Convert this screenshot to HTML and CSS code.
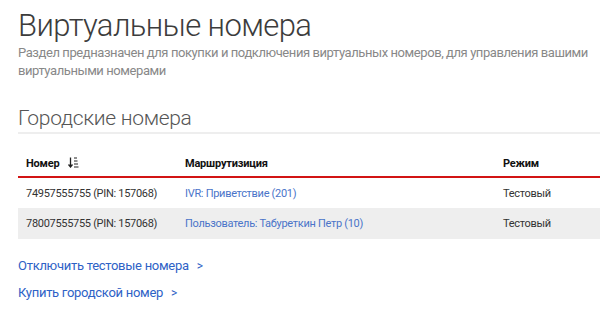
FILE: index.html
```html
<!DOCTYPE html>
<html lang="ru">
<head>
  <meta charset="UTF-8" />
  <title>Виртуальные номера</title>
  <link rel="stylesheet" href="styles.css">
</head>
<body>

  <div class="page">
    <h1 class="page-title">Виртуальные номера</h1>
    <p class="page-lead">Раздел предназначен для покупки и подключения виртуальных номеров, для управления вашими виртуальными номерами</p>

    <h2 class="section-title">Городские номера</h2>

    <table class="numbers">
      <thead>
        <tr>
          <th class="col-number">Номер
            <svg class="sort-icon" width="11" height="11" viewBox="0 0 11 11">
              <path d="M2.5 0.5v9M0.5 7.5l2 2.5 2-2.5" fill="none" stroke="#222" stroke-width="1.3"/>
              <path d="M6 1h3M6 4h3.5M6 7h4M6 10h4.5" stroke="#222" stroke-width="1.2"/>
            </svg>
          </th>
          <th class="col-route">Маршрутизиция</th>
          <th class="col-mode">Режим</th>
        </tr>
      </thead>
      <tbody>
        <tr>
          <td>74957555755 (PIN: 157068)</td>
          <td><a href="#">IVR: Приветствие (201)</a></td>
          <td>Тестовый</td>
        </tr>
        <tr>
          <td>78007555755 (PIN: 157068)</td>
          <td><a href="#">Пользователь: Табуреткин Петр (10)</a></td>
          <td>Тестовый</td>
        </tr>
      </tbody>
    </table>

    <div class="actions">
      <a class="action" href="#">Отключить тестовые номера</a>
      <a class="action" href="#">Купить городской номер</a>
    </div>
  </div>

</body>
</html>
```

FILE: styles.css
```css
body {
  margin: 0;
  font-family: Roboto, 'Noto Sans', sans-serif;
  color: #333;
  background: #fff;
  overflow: hidden;
}

.page {
  padding: 0 0 0 18px;
}

.page-title {
  margin: 0;
  padding-top: 8px;
  font-size: 31px;
  font-weight: 300;
  line-height: 36px;
  letter-spacing: -0.6px;
  color: #3c3c3c;
}

.page-lead {
  margin: 0;
  font-size: 13px;
  line-height: 18px;
  letter-spacing: -0.42px;
  color: #888;
}

.section-title {
  margin: 24px 0 0;
  font-size: 21px;
  font-weight: 300;
  line-height: 28px;
  letter-spacing: -0.3px;
  color: #555;
  border-bottom: 2px solid #eee;
}

.numbers {
  width: 100%;
  table-layout: fixed;
  border-collapse: collapse;
  margin-top: 19px;
  font-size: 11px;
  letter-spacing: -0.3px;
}

.numbers th,
.numbers td {
  box-sizing: border-box;
  white-space: nowrap;
}

.numbers th {
  text-align: left;
  font-weight: bold;
  font-size: 11px;
  line-height: 13px;
  letter-spacing: -0.2px;
  color: #111;
  padding: 4px 8px 6px;
  border-bottom: 2px solid #d21414;
}

.numbers td {
  padding: 0 8px;
  height: 31px;
  color: #333;
}

.numbers tbody tr:nth-child(2) td {
  background: #eee;
}

.col-number { width: 159px; }
.col-route { width: 318px; }

.sort-icon {
  vertical-align: -1px;
  margin-left: 6px;
}

.numbers a {
  color: #4a74c9;
  text-decoration: none;
}

.actions {
  display: flex;
  flex-direction: column;
  align-items: flex-start;
  gap: 9px;
  margin-top: 18px;
}

.action {
  font-size: 13px;
  line-height: 18px;
  letter-spacing: -0.28px;
  color: #2e62c6;
  text-decoration: none;
}

.action::after {
  content: '>';
  margin-left: 8px;
  font-size: 12px;
}
```
